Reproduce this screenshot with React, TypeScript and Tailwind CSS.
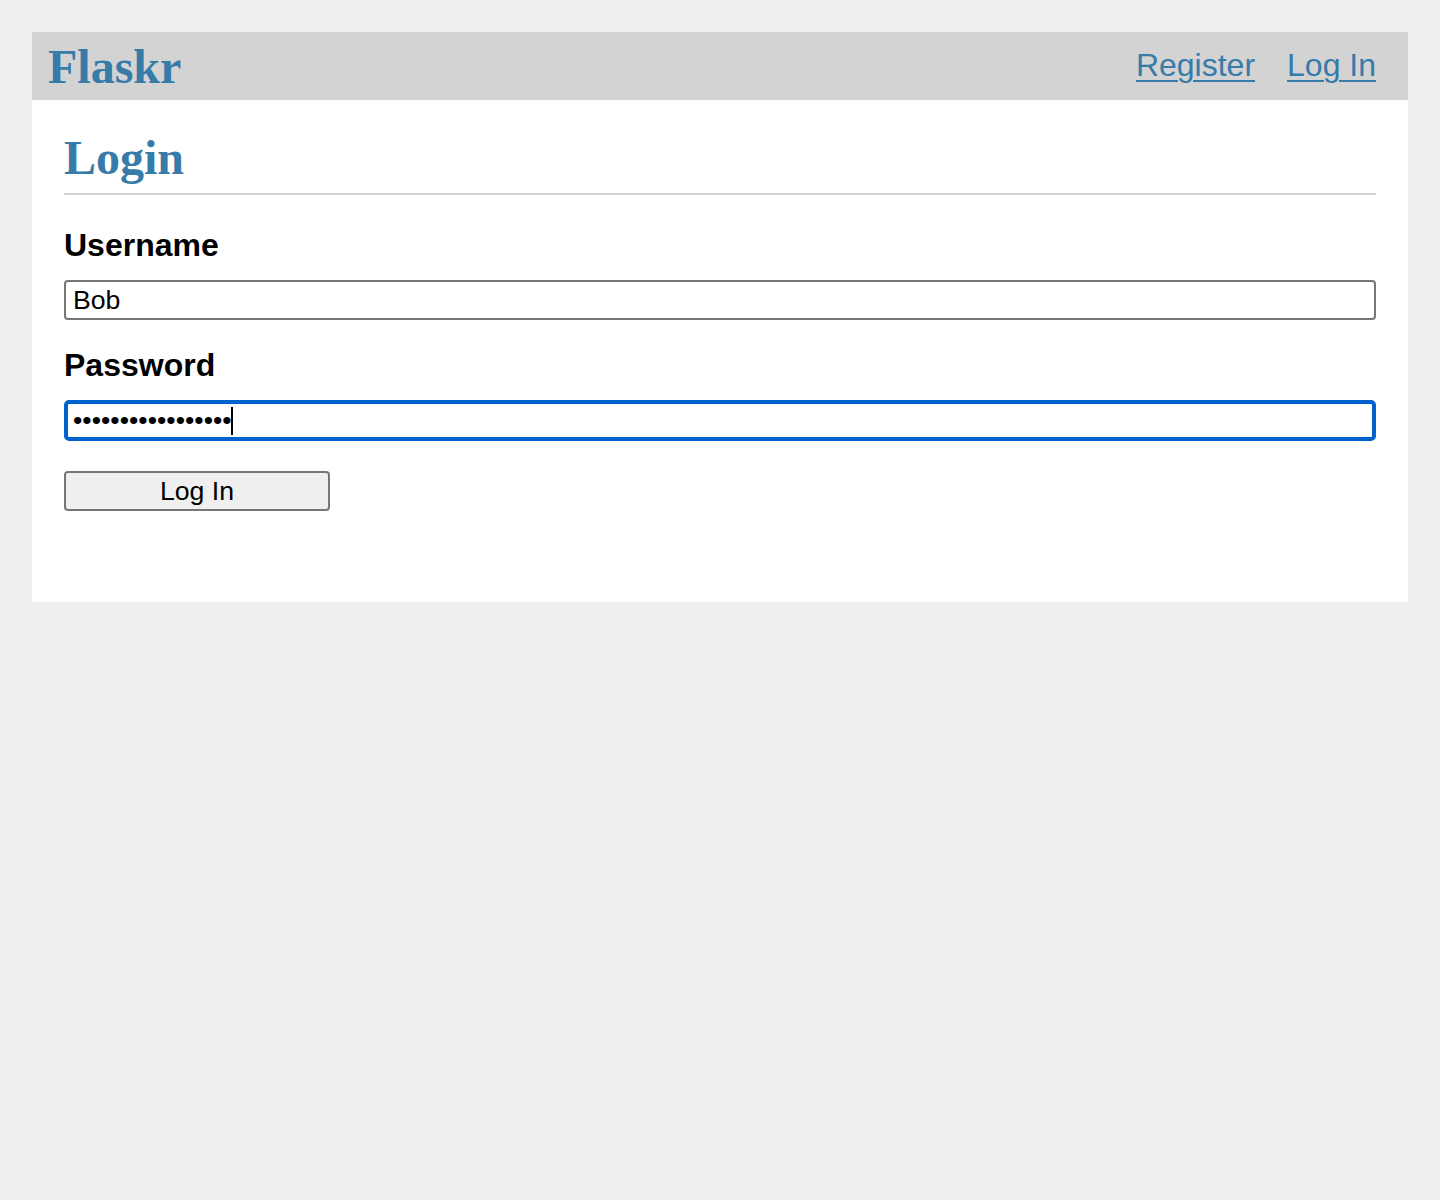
import React from "react";

export default function App() {
  const sans = { fontFamily: '"Liberation Sans", Arial, sans-serif' };
  return (
    <div
      className="min-h-[1200px] bg-[#eeeeee] p-8 font-['Liberation_Sans',Arial,sans-serif] text-black"
    >
      <div className="bg-white">
        <nav className="flex h-[68px] items-center bg-[#d3d3d3] px-4">
          <h1 className="flex-auto font-['Liberation_Serif','Times_New_Roman',serif] text-[48px] font-bold leading-[normal] text-[#377ba8]">
            Flaskr
          </h1>
          <ul className="mb-[1px] flex">
            <li>
              <a className="block px-4 text-[32px] leading-[normal] text-[#377ba8] underline decoration-2 underline-offset-[4px]" href="#">
                Register
              </a>
            </li>
            <li>
              <a className="block px-4 text-[32px] leading-[normal] text-[#377ba8] underline decoration-2 underline-offset-[4px]" href="#">
                Log In
              </a>
            </li>
          </ul>
        </nav>
        <section className="px-8 pb-8">
          <header className="flex items-end border-b-2 border-[#d3d3d3]">
            <h1 className="mt-[30px] mb-2 flex-auto font-['Liberation_Serif','Times_New_Roman',serif] text-[48px] font-bold leading-[normal] text-[#377ba8]">
              Login
            </h1>
          </header>
          <form className="mt-8 mb-8 flex flex-col" onSubmit={(e) => e.preventDefault()}>
            <label className="mb-4 text-[32px] font-bold leading-[normal]" style={sans}>
              Username
            </label>
            <div className="mb-[27px] flex h-[40px] items-center rounded-[4px] border-2 border-[#767676] px-[7px] text-[26.67px] leading-none" style={sans}>
              Bob
            </div>
            <label className="mb-4 text-[32px] font-bold leading-[normal]" style={sans}>
              Password
            </label>
            <div className="mb-[30px] flex h-[41px] items-center rounded-[5px] border-[4px] border-[#0062cc] px-[5px] text-[26.67px] leading-none" style={sans}>
              <span className="tracking-[0px]">•••••••••••••••••</span>
              <span className="ml-[-1px] h-[28px] w-[2px] bg-black" />
            </div>
            <button
              type="submit"
              className="flex h-[40px] w-[266px] items-center justify-center self-start rounded-[4px] border-2 border-[#767676] bg-[#efefef] text-[26.67px] leading-none text-black"
              style={sans}
            >
              Log In
            </button>
          </form>
          <div className="h-[27px]" />
        </section>
      </div>
    </div>
  );
}
